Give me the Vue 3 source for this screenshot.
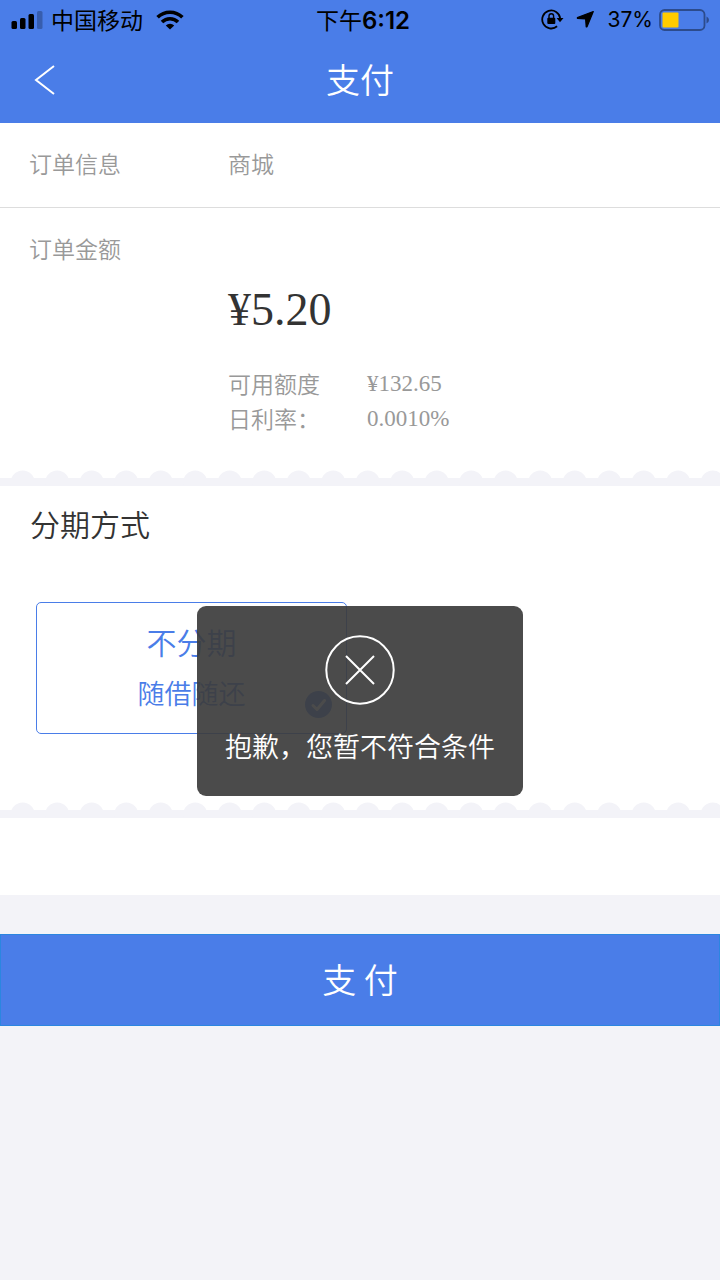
<script setup>
import { ref } from 'vue'

const order = { info: '商城', amount: '¥5.20', quota: '¥132.65', rate: '0.0010%' }
const plan = ref('none')
const scallops = Array.from({ length: 21 }, (_, i) => 22.7 + i * 34.5)
</script>

<template>
  <div class="page">
    <header class="header">
      <div class="status">
        <div class="status-left">
          <svg width="32" height="20" viewBox="0 0 32 20" aria-hidden="true">
            <rect x="0.500" y="11" width="5.500" height="8" rx="1.500" />
            <rect x="9" y="8" width="5.500" height="11" rx="1.500" />
            <rect x="17.500" y="4" width="5.500" height="15" rx="1.500" />
            <rect x="26" y="1" width="5.500" height="18" rx="1.500" opacity=".25" />
          </svg>
          <span class="carrier">中国移动</span>
          <svg width="28" height="20" viewBox="0 0 28 20" fill="none" stroke="#000" stroke-width="3.600" aria-hidden="true">
            <path d="M1.600 7.300A17.600 17.600 0 0 1 26.400 7.300" />
            <path d="M6 12A11.400 11.400 0 0 1 22 12" />
            <path d="M14 19.500L9.800 15.400A6 6 0 0 1 18.200 15.400Z" fill="#000" stroke="none" />
          </svg>
        </div>
        <div class="time">下午<b>6:12</b></div>
        <div class="status-right">
          <svg width="24" height="22" viewBox="0 0 24 22" aria-hidden="true">
            <path d="M16.100 17.300A9 9 0 1 1 19.200 9.500" fill="none" stroke="#000" stroke-width="1.800" />
            <path d="M15.600 9H22.500L19 13.300Z" />
            <rect x="6.300" y="8.800" width="8" height="6.200" rx="1" />
            <path d="M8 9V7A2.300 2.300 0 0 1 12.600 7V9" fill="none" stroke="#000" stroke-width="1.400" />
          </svg>
          <svg class="arrow" width="19" height="19" viewBox="0 0 19 19" stroke="#000" stroke-width="1.200" stroke-linejoin="round" aria-hidden="true">
            <path d="M17.300 1.500L11 16.800H10.200L9.600 8.900L1.400 8.300V7.600Z" />
          </svg>
          <span class="percent">37%</span>
          <svg width="51" height="24" viewBox="0 0 51 24" aria-hidden="true">
            <rect x="1" y="2" width="44.500" height="20" rx="4.500" fill="none" stroke="#2c4b8c" stroke-width="1.800" />
            <rect x="3.500" y="4.500" width="16" height="15" rx="1" fill="#fc0" />
            <path d="M47.500 8.500Q50 9.500 50 12T47.500 15.500Z" fill="#2c4b8c" />
          </svg>
        </div>
      </div>
      <nav class="nav">
        <button class="back" type="button" aria-label="返回">
          <svg width="22" height="32" viewBox="0 0 22 32" fill="none" stroke="#fff" stroke-width="2" aria-hidden="true">
            <path d="M20 3L2 17L20 31" />
          </svg>
        </button>
        <h1>支付</h1>
      </nav>
    </header>

    <main>
      <section class="row info">
        <span>订单信息</span>
        <span>{{ order.info }}</span>
      </section>

      <section class="row sum">
        <span>订单金额</span>
        <div class="sum-body">
          <strong class="amount">{{ order.amount }}</strong>
          <dl class="details">
            <dt>可用额度</dt>
            <dd>{{ order.quota }}</dd>
            <dt>日利率：</dt>
            <dd>{{ order.rate }}</dd>
          </dl>
        </div>
      </section>

      <svg class="edge" viewBox="0 0 720 16" aria-hidden="true">
        <rect y="8" width="720" height="8" />
        <circle v-for="x in scallops" :key="x" :cx="x" cy="12.500" r="12" />
      </svg>

      <section class="plans">
        <h2>分期方式</h2>
        <label class="option">
          <span class="option-name">不分期</span>
          <span class="option-note">随借随还</span>
          <input v-model="plan" type="radio" name="plan" value="none" />
          <svg class="tick" width="27" height="27" viewBox="0 0 27 27" fill="none" stroke="#fff" stroke-width="3" stroke-linecap="round" stroke-linejoin="round" aria-hidden="true">
            <path d="M8 14.500L12 18.500L19.500 9.500" />
          </svg>
        </label>
      </section>

      <svg class="edge" viewBox="0 0 720 16" aria-hidden="true">
        <rect y="8" width="720" height="8" />
        <circle v-for="x in scallops" :key="x" :cx="x" cy="12.500" r="12" />
      </svg>

      <div class="blank"></div>
      <button class="pay" type="button">支 付</button>
    </main>

    <div class="toast" role="alert">
      <svg width="70" height="70" viewBox="0 0 70 70" fill="none" stroke="#fff" stroke-width="2" aria-hidden="true">
        <circle cx="35" cy="35" r="33.700" />
        <path d="M21 21L49 49M49 21L21 49" />
      </svg>
      <span>抱歉，您暂不符合条件</span>
    </div>
  </div>
</template>

<style>
body {
  background: #f3f3f8;
}
</style>

<style scoped>
.page {
  position: relative;
  min-height: 100vh;
  background: #f3f3f8;
  color: #999;
  font: 350 23px/35px "Noto Sans CJK SC", sans-serif;
}

h1, h2, dl, dd {
  margin: 0;
  font-weight: 350;
}

button {
  padding: 0;
  border: 0;
  background: none;
  color: #fff;
  font: inherit;
}

svg {
  display: block;
  flex: none;
}

.header {
  background: #4a7de8;
}

.status {
  display: grid;
  grid-template-columns: 1fr auto 1fr;
  align-items: center;
  height: 39px;
  padding: 0 10px 0 11px;
  color: #000;
  font-weight: 400;
}

.status-left, .status-right {
  display: flex;
  align-items: center;
}

.carrier {
  margin: 0 13px 0 8px;
}

.status-right {
  justify-content: flex-end;
}

.arrow {
  margin: 0 13px 0 11px;
}

.percent {
  margin-right: 6px;
  font-family: Inter, sans-serif;
  font-size: 21px;
}

.time {
  padding-left: 5px;
}

.time b {
  font-family: Inter, sans-serif;
  font-size: 24px;
  font-weight: 600;
}

.nav {
  display: grid;
  grid-template-columns: 1fr auto 1fr;
  align-items: center;
  height: 84px;
  padding-bottom: 4px;
  box-sizing: border-box;
}

.back {
  justify-self: start;
  padding-left: 34px;
}

h1 {
  color: #fff;
  font-size: 34px;
  line-height: 50px;
}

.row {
  display: grid;
  grid-template-columns: 199px 1fr;
  padding: 23px 29px 26px;
  background: #fff;
}

.info {
  border-bottom: 1px solid #ddd;
}

.sum {
  padding-bottom: 34px;
}

.sum-body {
  padding-top: 49px;
}

.amount {
  display: block;
  color: #333;
  font: 400 46px/60px "Liberation Serif", serif;
}

.details {
  display: grid;
  grid-template-columns: 139px 1fr;
  margin-top: 26px;
}

dd {
  padding-top: 1px;
  line-height: 34px;
  font-family: "Liberation Serif", serif;
  font-weight: 400;
}

.edge {
  width: 100%;
  height: auto;
  background: #fff;
  fill: #f3f3f8;
}

.plans {
  padding: 17px 36px 68px;
  background: #fff;
}

h2 {
  margin: 0 0 59px -6px;
  color: #333;
  font-size: 30px;
  line-height: 40px;
}

.option {
  position: relative;
  box-sizing: border-box;
  display: flex;
  flex-direction: column;
  align-items: center;
  width: 48%;
  padding: 13px 0 15px;
  border: 1px solid #4a7de8;
  border-radius: 5px;
  color: #4a7de8;
  line-height: 51px;
}

.option-name {
  font-size: 30px;
}

.option-note {
  font-size: 27px;
}

.option input, .tick {
  position: absolute;
  right: 14px;
  bottom: 15px;
  width: 27px;
  height: 27px;
  margin: 0;
}

.option input {
  appearance: none;
  border-radius: 50%;
  background: #4a7de8;
}

.blank {
  height: 77px;
  margin-bottom: 39px;
  background: #fff;
}

.pay {
  display: block;
  width: 100%;
  height: 92px;
  padding-bottom: 4px;
  border: 1px solid #2b86e0;
  background: #4a7de8;
  font-size: 34px;
}

.toast {
  position: absolute;
  top: 606px;
  left: 50%;
  display: flex;
  flex-direction: column;
  align-items: center;
  gap: 21px;
  padding: 29px 28px 30px;
  border-radius: 9px;
  background: rgba(60, 60, 60, 0.92);
  color: #fff;
  font-size: 27px;
  line-height: 40px;
  white-space: nowrap;
  transform: translateX(-50%);
}
</style>
